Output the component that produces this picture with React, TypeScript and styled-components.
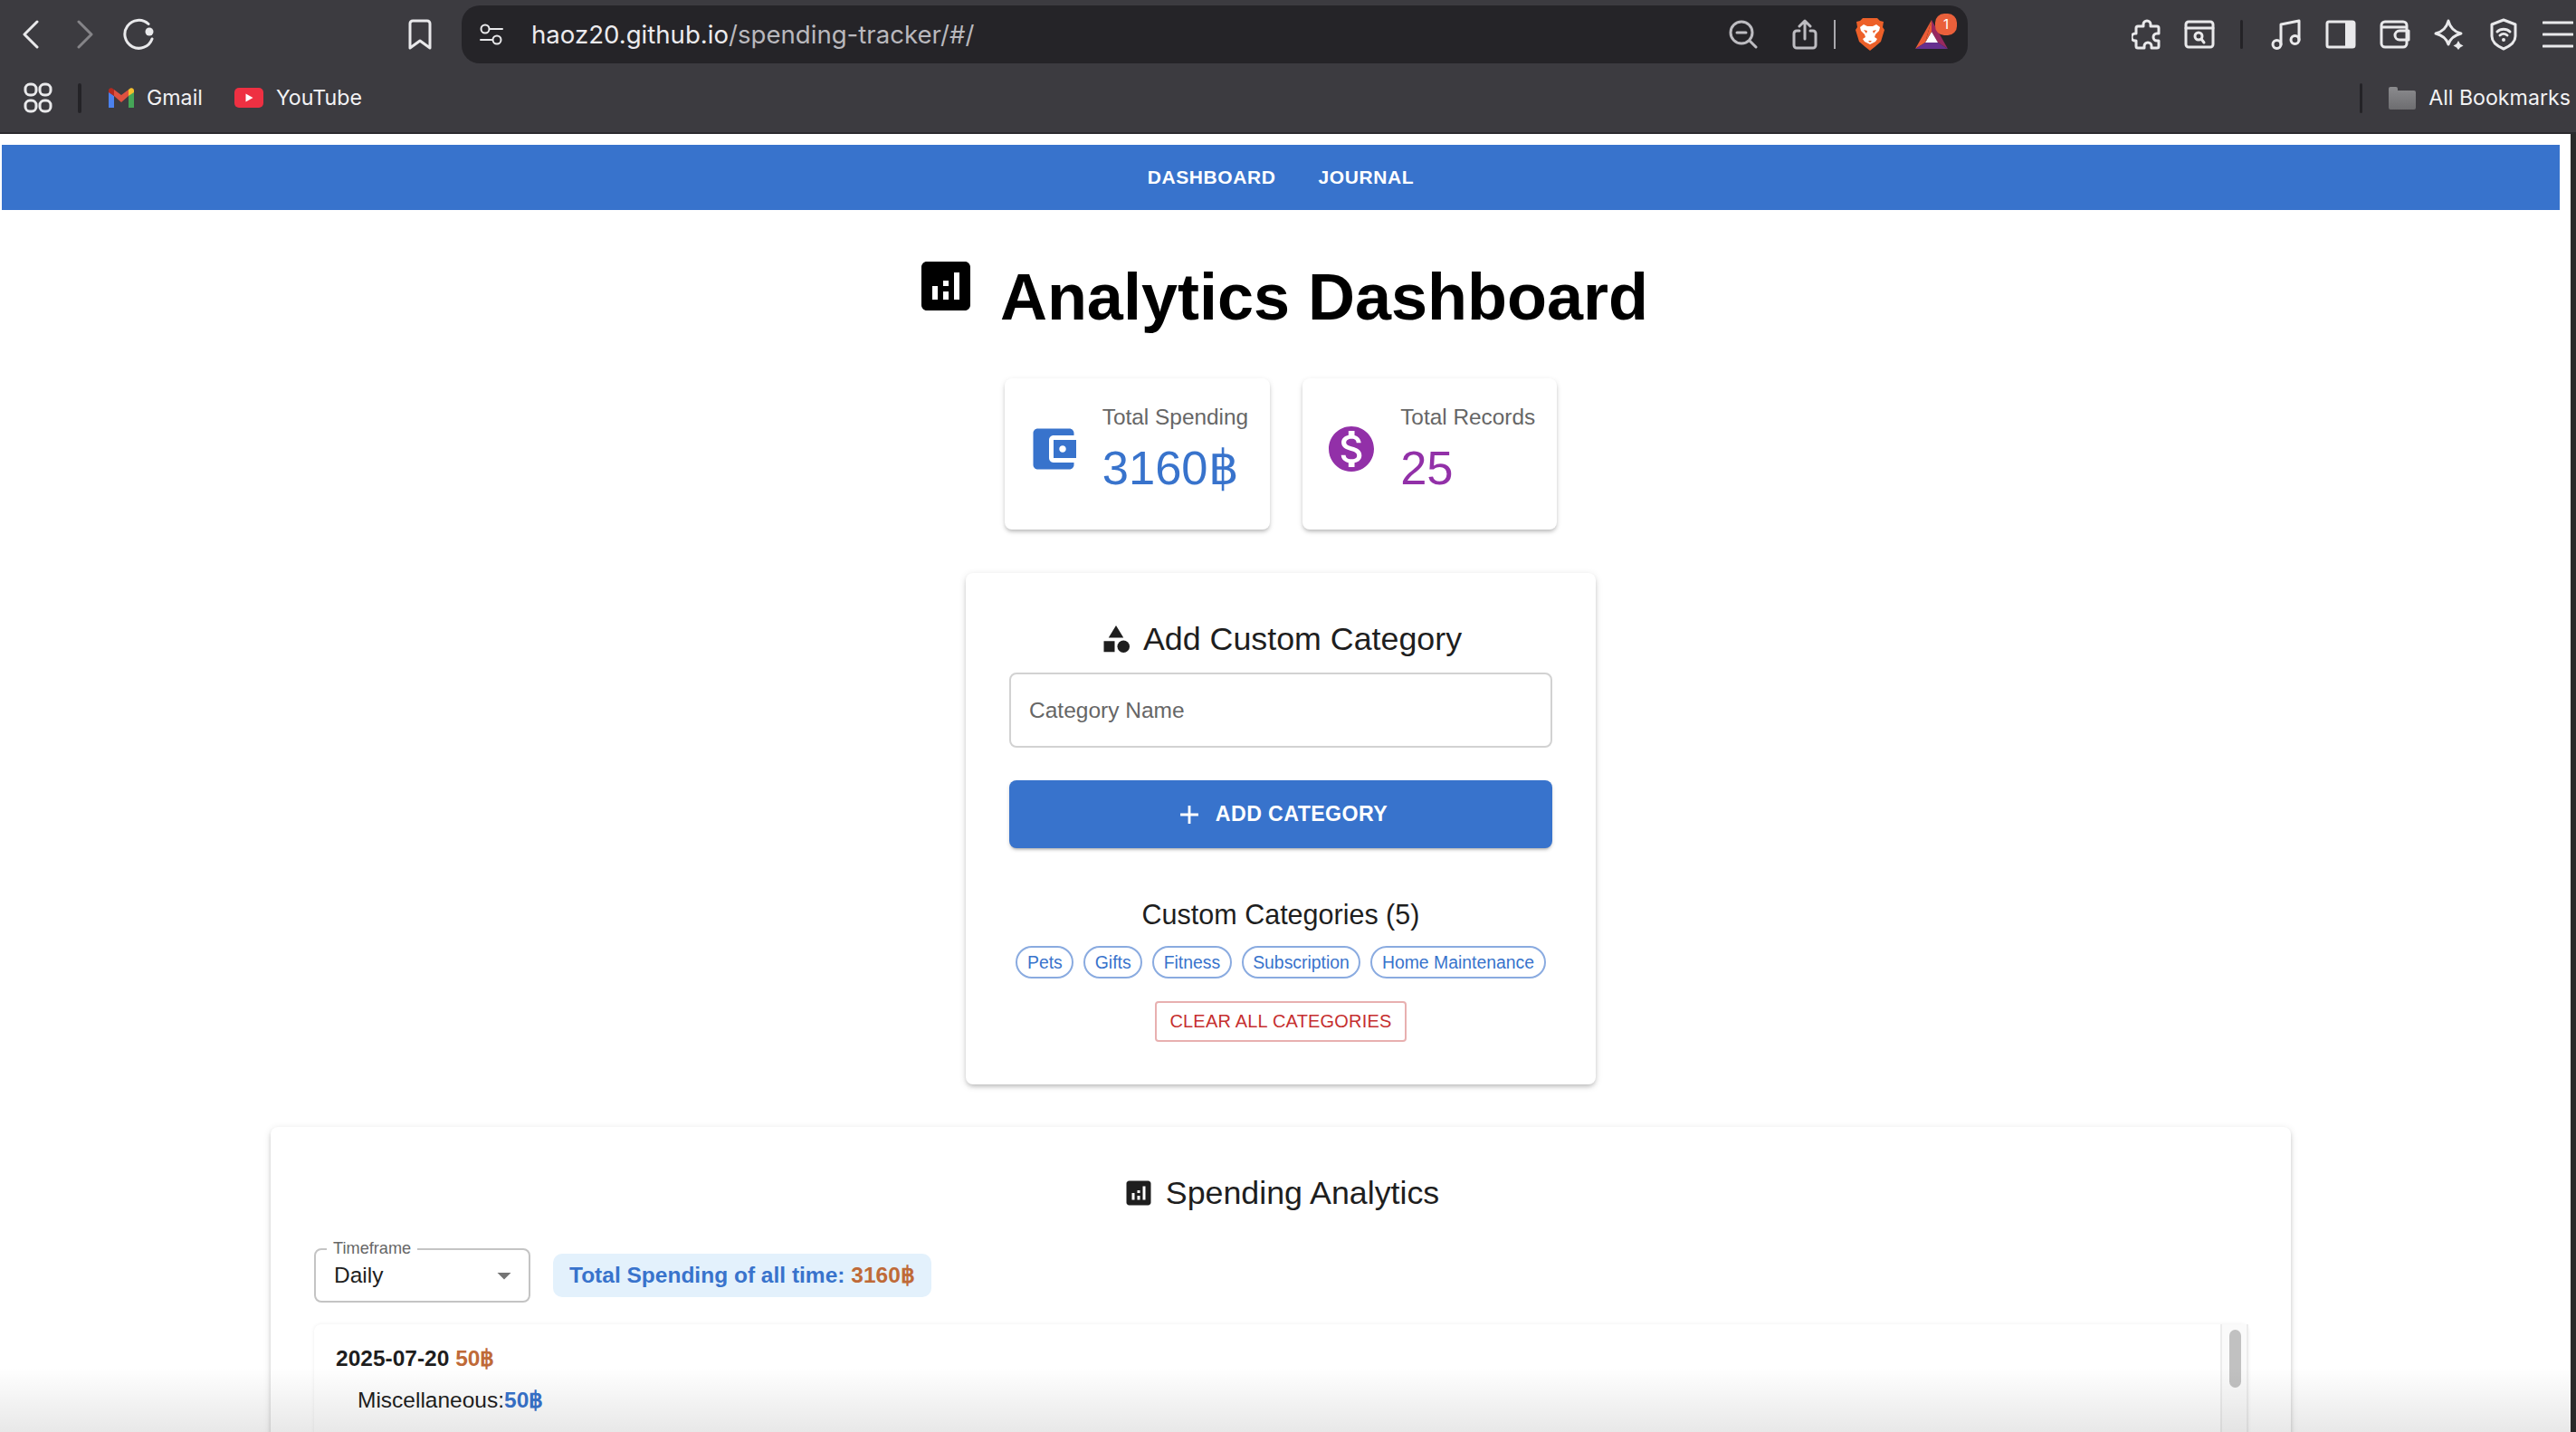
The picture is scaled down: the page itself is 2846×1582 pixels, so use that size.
import styled, { createGlobalStyle } from "styled-components";

const GlobalStyle = createGlobalStyle`
  html, body {
    margin: 0;
    padding: 0;
    height: 100%;
    overflow: hidden;
    background: #fff;
  }
  body {
    font-family: "Liberation Sans", Arial, sans-serif;
  }
  * {
    box-sizing: border-box;
  }
`;

const Screen = styled.div`
  position: relative;
  display: flex;
  flex-direction: column;
  width: 100vw;
  height: 100vh;
  overflow: hidden;
`;

/* browser chrome */
const Chrome = styled.header`
  flex: none;
  height: 148px;
  background: #3c3b40;
  border-bottom: 2px solid #2b2a2e;
  font-family: Inter, "Liberation Sans", sans-serif;
`;

const Toolbar = styled.div`
  display: flex;
  align-items: flex-start;
  height: 76px;
  padding: 6px 0 0 4px;
`;

const Slot = styled.div<{ $w?: number }>`
  display: flex;
  align-items: center;
  justify-content: center;
  flex: none;
  width: ${(p) => p.$w ?? 60}px;
  height: 64px;
`;

const NavGroup = styled.div`
  display: flex;
  flex: none;
  width: 490px;
`;

const BookmarkSlot = styled(Slot)`
  margin-left: auto;
`;

const AddressBar = styled.div`
  display: flex;
  align-items: center;
  flex: none;
  width: 1664px;
  height: 64px;
  margin-left: 16px;
  padding: 0 10px 0 20px;
  background: #252428;
  border-radius: 20px;
`;

const Url = styled.div`
  margin-left: 31px;
  font-size: 27.6px;
  color: #b9b8bd;
  white-space: nowrap;
`;

const Host = styled.span`
  color: #ecebee;
`;

const AddressActions = styled.div`
  display: flex;
  align-items: center;
  gap: 8px;
  margin-left: auto;
`;

const ThinDivider = styled.div`
  width: 2px;
  height: 32px;
  background: #a9a8ad;
`;

const BatBox = styled.div`
  position: relative;
  display: flex;
`;

const BatBadge = styled.span`
  position: absolute;
  top: -7px;
  right: -10px;
  width: 24px;
  height: 24px;
  border-radius: 10px;
  background: #ea603b;
  color: #fff;
  font-size: 15px;
  line-height: 24px;
  text-align: center;
`;

const ToolbarRight = styled.div`
  display: flex;
  flex: none;
  margin-left: 168px;
`;

const DarkDivider = styled.div`
  flex: none;
  width: 3px;
  height: 32px;
  margin: 16px 18px 0 17px;
  background: #242327;
  border-radius: 2px;
`;

const BookmarksBar = styled.div`
  display: flex;
  align-items: center;
  height: 70px;
  padding: 0 6px 6px 26px;
  color: #f2f2f4;
  font-size: 23.2px;
`;

const BookmarkDivider = styled.div`
  flex: none;
  width: 4px;
  height: 33px;
  margin: 0 30px 0 28px;
  background: #242327;
  border-radius: 2px;
`;

const BookmarkItem = styled.div`
  display: flex;
  align-items: center;
  gap: 14px;
  margin-right: 35px;
`;

const BookmarksEnd = styled.div`
  display: flex;
  align-items: center;
  margin-left: auto;
`;

const EndDivider = styled(BookmarkDivider)`
  width: 3px;
  margin: 0 29px 0 0;
`;

const AllBookmarks = styled.div`
  display: flex;
  align-items: center;
  gap: 14px;
`;

/* page */
const Viewport = styled.div`
  flex: 1;
  min-height: 0;
  display: flex;
`;

const Page = styled.main`
  flex: 1;
  min-width: 0;
  padding: 12px 12px 0 2px;
`;

const WindowEdge = styled.div`
  flex: none;
  width: 6px;
  background: #2b2b2b;
`;

const NavBar = styled.nav`
  display: flex;
  justify-content: center;
  align-items: center;
  gap: 47px;
  height: 72px;
  background: #3873cc;
`;

const NavLink = styled.a`
  color: #fff;
  font-size: 21px;
  font-weight: 700;
  letter-spacing: 0.6px;
`;

const TitleRow = styled.div`
  display: flex;
  justify-content: center;
  align-items: flex-start;
  gap: 24px;
  margin-top: 48px;
  height: 92px;
`;

const Title = styled.h1`
  margin: 0;
  padding-top: 4px;
  font-size: 72px;
  line-height: 88px;
  font-weight: 700;
  color: #000;
`;

const Stats = styled.section`
  display: flex;
  justify-content: center;
  gap: 36px;
  margin-top: 46px;
`;

const StatCard = styled.div`
  display: flex;
  align-items: flex-start;
  gap: 24px;
  height: 167px;
  padding: 24px;
  background: #fff;
  border-radius: 8px;
  box-shadow: 0 3px 4px -1px rgba(0, 0, 0, 0.2), 0 2px 6px rgba(0, 0, 0, 0.12);
`;

const StatIcon = styled.svg<{ $color: string }>`
  flex: none;
  width: 60px;
  height: 60px;
  margin-top: 24px;
  fill: ${(p) => p.$color};
`;

const StatText = styled.div`
  padding-top: 1px;
`;

const StatLabel = styled.div`
  font-size: 24.4px;
  line-height: 36px;
  color: #666;
`;

const StatValue = styled.div<{ $color: string }>`
  font-size: 52.5px;
  line-height: 75px;
  color: ${(p) => p.$color};
`;

const CategoryCard = styled.section`
  width: 696px;
  height: 565px;
  margin: 48px auto 0;
  padding: 48px;
  background: #fff;
  border-radius: 8px;
  box-shadow: 0 3px 5px -1px rgba(0, 0, 0, 0.2), 0 2px 8px rgba(0, 0, 0, 0.12);
`;

const CardHeading = styled.h2`
  display: flex;
  justify-content: center;
  align-items: center;
  gap: 12px;
  height: 50px;
  margin: 0 0 12px;
  font-size: 35.8px;
  font-weight: 400;
  color: #1e1e1e;
`;

const HeadingIcon = styled.svg`
  flex: none;
  width: 36px;
  height: 36px;
  fill: #1e1e1e;
`;

const NameField = styled.div`
  display: flex;
  align-items: center;
  height: 83px;
  padding: 0 20px;
  border: 2px solid #d2d2d2;
  border-radius: 8px;
  font-size: 24.5px;
  color: #666;
`;

const AddButton = styled.button`
  display: flex;
  justify-content: center;
  align-items: center;
  gap: 12px;
  width: 100%;
  height: 75px;
  margin-top: 36px;
  border: 0;
  border-radius: 8px;
  background: #3873cc;
  color: #fff;
  font-family: inherit;
  font-size: 23.2px;
  font-weight: 700;
  letter-spacing: 0.4px;
  box-shadow: 0 3px 3px -2px rgba(0, 0, 0, 0.25), 0 2px 4px rgba(0, 0, 0, 0.14);
`;

const PlusIcon = styled.svg`
  flex: none;
  width: 34px;
  height: 34px;
  fill: #fff;
`;

const SubHeading = styled.h3`
  margin: 51px 0 12px;
  font-size: 30.5px;
  line-height: 45px;
  font-weight: 400;
  text-align: center;
  color: #1e1e1e;
`;

const ChipRow = styled.div`
  display: flex;
  justify-content: center;
  gap: 11px;
`;

const Chip = styled.span`
  height: 36px;
  padding: 0 10.5px;
  border: 2px solid #8aabe0;
  border-radius: 18px;
  color: #3873cc;
  font-size: 19.4px;
  line-height: 32px;
  white-space: nowrap;
`;

const ClearRow = styled.div`
  display: flex;
  justify-content: center;
  margin-top: 25px;
`;

const ClearButton = styled.button`
  height: 45px;
  padding: 0 14px;
  background: #fff;
  border: 2px solid #e8b0b0;
  border-radius: 4px;
  color: #c62f2f;
  font-family: inherit;
  font-size: 20px;
  letter-spacing: 0.2px;
`;

const AnalyticsCard = styled.section`
  width: 2232px;
  height: 700px;
  margin: 47px auto 0;
  padding: 48px;
  background: #fff;
  border-radius: 8px;
  box-shadow: 0 3px 5px -1px rgba(0, 0, 0, 0.2), 0 2px 8px rgba(0, 0, 0, 0.12);
`;

const FilterRow = styled.div`
  display: flex;
  align-items: center;
  gap: 25px;
  margin-top: 36px;
`;

const SelectBox = styled.div`
  position: relative;
  display: flex;
  justify-content: space-between;
  align-items: center;
  width: 239px;
  height: 60px;
  padding: 0 9px 0 20px;
  border: 2px solid #c4c4c4;
  border-radius: 8px;
  font-size: 24.5px;
  color: #1e1e1e;
`;

const SelectLegend = styled.span`
  position: absolute;
  top: -12px;
  left: 12px;
  padding: 0 7px;
  background: #fff;
  font-size: 18.2px;
  line-height: 20px;
  color: #666;
`;

const CaretIcon = styled.svg`
  width: 36px;
  height: 36px;
  fill: #757575;
`;

const TotalBadge = styled.div`
  height: 48px;
  padding: 0 18px;
  border-radius: 10px;
  background: #e3f1fc;
  color: #3873cc;
  font-size: 24.5px;
  font-weight: 700;
  line-height: 48px;
  white-space: nowrap;
`;

const Amber = styled.span`
  color: #bf6a38;
`;

const Blue = styled.span`
  color: #3873cc;
  font-weight: 700;
`;

const HistoryPanel = styled.div`
  display: flex;
  width: 2137px;
  height: 400px;
  margin-top: 24px;
  border-radius: 8px;
  box-shadow: 0 0 4px rgba(0, 0, 0, 0.07);
`;

const HistoryList = styled.div`
  flex: 1;
  padding: 24px;
`;

const DayRow = styled.div`
  font-size: 24.5px;
  font-weight: 700;
  line-height: 28px;
  color: #1e1e1e;
`;

const EntryRow = styled.div`
  margin-top: 18px;
  padding-left: 24px;
  font-size: 24.5px;
  line-height: 28px;
  color: #1e1e1e;
`;

const ScrollTrack = styled.div`
  flex: none;
  width: 31px;
  padding: 6px 6px 0 8px;
  background: #fafafa;
  border-left: 2px solid #ececec;
  border-right: 2px solid #ececec;
`;

const ScrollThumb = styled.div`
  height: 64px;
  border-radius: 8px;
  background: #c1c1c1;
`;

const BottomFade = styled.div`
  position: absolute;
  left: 0;
  right: 0;
  bottom: 0;
  height: 72px;
  background: linear-gradient(to bottom, rgba(0, 0, 0, 0), rgba(0, 0, 0, 0.09));
  pointer-events: none;
`;

const line = {
  fill: "none",
  stroke: "#e9e9eb",
  strokeWidth: 3,
  strokeLinecap: "round" as const,
  strokeLinejoin: "round" as const,
};

const ASSESSMENT =
  "M19 3H5c-1.1 0-2 .9-2 2v14c0 1.1.9 2 2 2h14c1.1 0 2-.9 2-2V5c0-1.1-.9-2-2-2zM9 17H7v-5h2v5zm4 0h-2v-3h2v3zm0-5h-2v-2h2v2zm4 5h-2V7h2v10z";

function Svg({ w, h, children }: { w: number; h: number; children: React.ReactNode }) {
  return (
    <svg width={w} height={h} viewBox={`0 0 ${w} ${h}`}>
      {children}
    </svg>
  );
}

function BraveLogo() {
  return (
    <Svg w={32} h={36}>
      <path d="M8 0h16l3 3 4 1-1 6 2 3-4 13-7 6-5 4-5-4-7-6L0 13l2-3-1-6 4-1z" fill="#ed6029" />
      <path
        d="M9 7l4 2h6l4-2 4 3-1 4-4 4-1 3 3 2-2 3-4 2-2 1-2-1-4-2-2-3 3-2-1-3-4-4-1-4z"
        fill="#fff"
      />
      <path d="M13 14l-4-1 3 4zM19 14l4-1-3 4zM14 25h4l-2 2z" fill="#ed6029" />
    </Svg>
  );
}

function BatLogo() {
  return (
    <Svg w={36} h={32}>
      <path d="M18 0L0 32l11-7z" fill="#ea5c36" />
      <path d="M18 0v13l7 12 11 7z" fill="#98295f" />
      <path d="M0 32h36l-11-7H11z" fill="#66308f" />
      <path d="M18 13l7 12H11z" fill="#fff" />
      <path d="M18 0l-7 25 7-12z" fill="#ea5c36" />
    </Svg>
  );
}

function GmailLogo() {
  return (
    <Svg w={28} h={22}>
      <path d="M0 4v18h6V9z" fill="#4c82ee" />
      <path d="M28 4v18h-6V9z" fill="#45a557" />
      <path d="M6 9l8 7 8-7V2l-8 6-8-6z" fill="#de5140" />
      <path d="M22 2l2-1.5C26 -.5 28 1 28 3v2l-6 4z" fill="#f4bf2e" />
      <path d="M6 2L4 .5C2 -.5 0 1 0 3v2l6 4z" fill="#b42a20" />
    </Svg>
  );
}

function ChromeToolbar() {
  return (
    <Toolbar>
      <NavGroup>
        <Slot>
          <Svg w={20} h={32}>
            <path d="M17 2L3 16l14 14" {...line} />
          </Svg>
        </Slot>
        <Slot>
          <Svg w={20} h={32}>
            <path d="M3 2l14 14L3 30" {...line} stroke="#858488" />
          </Svg>
        </Slot>
        <Slot>
          <Svg w={36} h={36}>
            <path d="M28 6.5A15.5 15.5 0 1 0 32 23" {...line} />
            <circle cx="29" cy="15" r="4.5" fill="#e9e9eb" />
          </Svg>
        </Slot>
        <BookmarkSlot>
          <Svg w={28} h={36}>
            <path d="M3 6a3 3 0 0 1 3-3h16a3 3 0 0 1 3 3v27l-11-8-11 8z" {...line} />
          </Svg>
        </BookmarkSlot>
      </NavGroup>
      <AddressBar>
        <Svg w={26} h={24}>
          <circle cx="6" cy="6" r="4.5" {...line} strokeWidth={2} />
          <path d="M11 6h14M1 18h13" {...line} strokeWidth={2} />
          <circle cx="19" cy="18" r="4.5" {...line} strokeWidth={2} />
        </Svg>
        <Url>
          <Host>haoz20.github.io</Host>/spending-tracker/#/
        </Url>
        <AddressActions>
          <Slot $w={72}>
            <Svg w={32} h={32}>
              <circle cx="14" cy="14" r="12" {...line} stroke="#bdbcc1" />
              <path d="M9 14h10M23 23l7 7" {...line} stroke="#bdbcc1" />
            </Svg>
          </Slot>
          <Slot $w={48}>
            <Svg w={28} h={34}>
              <path
                d="M8 13H5a3 3 0 0 0-3 3v13a3 3 0 0 0 3 3h18a3 3 0 0 0 3-3V16a3 3 0 0 0-3-3h-3M14 22V2M8 8l6-6 6 6"
                {...line}
                stroke="#bdbcc1"
              />
            </Svg>
          </Slot>
          <ThinDivider />
          <Slot>
            <BraveLogo />
          </Slot>
          <Slot>
            <BatBox>
              <BatLogo />
              <BatBadge>1</BatBadge>
            </BatBox>
          </Slot>
        </AddressActions>
      </AddressBar>
      <ToolbarRight>
        <Slot>
          <Svg w={34} h={34}>
            <path
              d="M13 6a4 4 0 0 1 8 0v2h7a2 2 0 0 1 2 2v6h-2a4 4 0 0 0 0 8h2v6a2 2 0 0 1-2 2h-6v-2a4 4 0 0 0-8 0v2H7a2 2 0 0 1-2-2v-6H4a4 4 0 0 1 0-8h1v-6a2 2 0 0 1 2-2h6z"
              {...line}
            />
          </Svg>
        </Slot>
        <Slot $w={56}>
          <Svg w={34} h={32}>
            <rect x="2" y="2" width="30" height="28" rx="3" {...line} />
            <path d="M2 9h30" {...line} />
            <circle cx="16" cy="18" r="4" {...line} />
            <path d="M19 21l3 4" {...line} />
          </Svg>
        </Slot>
        <DarkDivider />
        <Slot>
          <Svg w={34} h={34}>
            <circle cx="6.5" cy="28" r="4.5" {...line} />
            <circle cx="26.5" cy="23" r="4.5" {...line} />
            <path d="M11 28V6l20-4v21" {...line} />
          </Svg>
        </Slot>
        <Slot>
          <Svg w={34} h={32}>
            <rect x="2" y="2" width="30" height="28" rx="2" {...line} />
            <path d="M22 2h10v28H22z" fill="#e9e9eb" />
          </Svg>
        </Slot>
        <Slot>
          <Svg w={34} h={32}>
            <path d="M6 2h20a4 4 0 0 1 4 4v20a4 4 0 0 1-4 4H6a4 4 0 0 1-4-4V6a4 4 0 0 1 4-4zM2 8h28" {...line} />
            <path d="M32 12H22a4 4 0 0 0 0 10h10z" {...line} />
          </Svg>
        </Slot>
        <Slot>
          <Svg w={34} h={34}>
            <path d="M16 2c2 8 6 12 14 14-8 2-12 6-14 12-2-6-6-10-14-12 8-2 12-6 14-14z" {...line} />
            <path d="M27 24l2 3.5 3.5 2-3.5 2-2 2.5-2-2.5-3.5-2 3.5-2z" fill="#e9e9eb" />
          </Svg>
        </Slot>
        <Slot>
          <Svg w={32} h={36}>
            <path d="M16 2l13 5v13c0 6-6 11-13 14C9 31 3 26 3 20V7z" {...line} />
            <path d="M9 15a10 10 0 0 1 14 0M12 19a6 6 0 0 1 8 0" {...line} />
            <circle cx="16" cy="24" r="2" fill="#e9e9eb" />
          </Svg>
        </Slot>
        <Slot>
          <Svg w={34} h={30}>
            <path d="M1 2h32M1 15h32M1 28h32" {...line} />
          </Svg>
        </Slot>
      </ToolbarRight>
    </Toolbar>
  );
}

function ChromeBookmarks() {
  return (
    <BookmarksBar>
      <Svg w={32} h={34}>
        <rect x="2" y="2" width="12" height="12" rx="5" {...line} />
        <rect x="18" y="2" width="12" height="12" rx="5" {...line} />
        <rect x="2" y="20" width="12" height="12" rx="5" {...line} />
        <rect x="18" y="20" width="12" height="12" rx="5" {...line} />
      </Svg>
      <BookmarkDivider />
      <BookmarkItem>
        <GmailLogo />
        Gmail
      </BookmarkItem>
      <BookmarkItem>
        <Svg w={32} h={22}>
          <rect width="32" height="22" rx="5" fill="#ee3042" />
          <path d="M12.5 6.5l8 4.5-8 4.5z" fill="#fff" />
        </Svg>
        YouTube
      </BookmarkItem>
      <BookmarksEnd>
        <EndDivider />
        <AllBookmarks>
          <Svg w={30} h={26}>
            <defs>
              <linearGradient id="folderFill" x1="0" y1="0" x2="0" y2="1">
                <stop offset="0" stopColor="#8b8b8e" />
                <stop offset="1" stopColor="#6d6d70" />
              </linearGradient>
            </defs>
            <path d="M0 3a2 2 0 0 1 2-2h6a2 2 0 0 1 2 2v2h18a2 2 0 0 1 2 2v17a2 2 0 0 1-2 2H2a2 2 0 0 1-2-2z" fill="url(#folderFill)" />
          </Svg>
          All Bookmarks
        </AllBookmarks>
      </BookmarksEnd>
    </BookmarksBar>
  );
}

function App() {
  return (
    <Screen>
      <GlobalStyle />
      <Chrome>
        <ChromeToolbar />
        <ChromeBookmarks />
      </Chrome>
      <Viewport>
        <Page>
          <NavBar>
            <NavLink>DASHBOARD</NavLink>
            <NavLink>JOURNAL</NavLink>
          </NavBar>

          <TitleRow>
            <svg width="72" height="72" viewBox="0 0 24 24" fill="#000">
              <path d={ASSESSMENT} />
            </svg>
            <Title>Analytics Dashboard</Title>
          </TitleRow>

          <Stats>
            <StatCard>
              <StatIcon $color="#3873cc" viewBox="0 0 24 24">
                <path d="M21 18v1c0 1.1-.9 2-2 2H5c-1.11 0-2-.9-2-2V5c0-1.1.89-2 2-2h14c1.1 0 2 .9 2 2v1h-9c-1.11 0-2 .9-2 2v8c0 1.1.89 2 2 2h9zm-9-2h10V8H12v8zm4-2.5c-.83 0-1.5-.67-1.5-1.5s.67-1.5 1.5-1.5 1.5.67 1.5 1.5-.67 1.5-1.5 1.5z" />
              </StatIcon>
              <StatText>
                <StatLabel>Total Spending</StatLabel>
                <StatValue $color="#3873cc">3160฿</StatValue>
              </StatText>
            </StatCard>
            <StatCard>
              <StatIcon $color="#9230a8" viewBox="0 0 24 24">
                <path d="M12 2C6.48 2 2 6.48 2 12s4.48 10 10 10 10-4.48 10-10S17.52 2 12 2zm1.41 16.09V20h-2.67v-1.93c-1.71-.36-3.16-1.46-3.27-3.4h1.96c.1 1.05.82 1.87 2.65 1.87 1.96 0 2.4-.98 2.4-1.59 0-.83-.44-1.61-2.67-2.14-2.48-.6-4.18-1.62-4.18-3.67 0-1.72 1.39-2.84 3.11-3.21V4h2.67v1.95c1.86.45 2.79 1.86 2.85 3.39H14.3c-.05-1.11-.64-1.87-2.22-1.87-1.5 0-2.4.68-2.4 1.64 0 .84.65 1.39 2.67 1.91s4.18 1.39 4.18 3.91c-.01 1.83-1.38 2.83-3.12 3.16z" />
              </StatIcon>
              <StatText>
                <StatLabel>Total Records</StatLabel>
                <StatValue $color="#9230a8">25</StatValue>
              </StatText>
            </StatCard>
          </Stats>

          <CategoryCard>
            <CardHeading>
              <HeadingIcon viewBox="0 0 24 24">
                <path d="M12 2l-5.5 9h11zM3 13.5h8v8H3z" />
                <circle cx="17.5" cy="17.5" r="4.5" />
              </HeadingIcon>
              Add Custom Category
            </CardHeading>
            <NameField>Category Name</NameField>
            <AddButton>
              <PlusIcon viewBox="0 0 24 24">
                <path d="M19 13h-6v6h-2v-6H5v-2h6V5h2v6h6v2z" />
              </PlusIcon>
              ADD CATEGORY
            </AddButton>
            <SubHeading>Custom Categories (5)</SubHeading>
            <ChipRow>
              <Chip>Pets</Chip>
              <Chip>Gifts</Chip>
              <Chip>Fitness</Chip>
              <Chip>Subscription</Chip>
              <Chip>Home Maintenance</Chip>
            </ChipRow>
            <ClearRow>
              <ClearButton>CLEAR ALL CATEGORIES</ClearButton>
            </ClearRow>
          </CategoryCard>

          <AnalyticsCard>
            <CardHeading>
              <HeadingIcon viewBox="0 0 24 24">
                <path d={ASSESSMENT} />
              </HeadingIcon>
              Spending Analytics
            </CardHeading>
            <FilterRow>
              <SelectBox>
                <SelectLegend>Timeframe</SelectLegend>
                Daily
                <CaretIcon viewBox="0 0 24 24">
                  <path d="M7 10l5 5 5-5z" />
                </CaretIcon>
              </SelectBox>
              <TotalBadge>
                Total Spending of all time: <Amber>3160฿</Amber>
              </TotalBadge>
            </FilterRow>
            <HistoryPanel>
              <HistoryList>
                <DayRow>
                  2025-07-20 <Amber>50฿</Amber>
                </DayRow>
                <EntryRow>
                  Miscellaneous:<Blue>50฿</Blue>
                </EntryRow>
              </HistoryList>
              <ScrollTrack>
                <ScrollThumb />
              </ScrollTrack>
            </HistoryPanel>
          </AnalyticsCard>
        </Page>
        <WindowEdge />
      </Viewport>
      <BottomFade />
    </Screen>
  );
}

export default App;
